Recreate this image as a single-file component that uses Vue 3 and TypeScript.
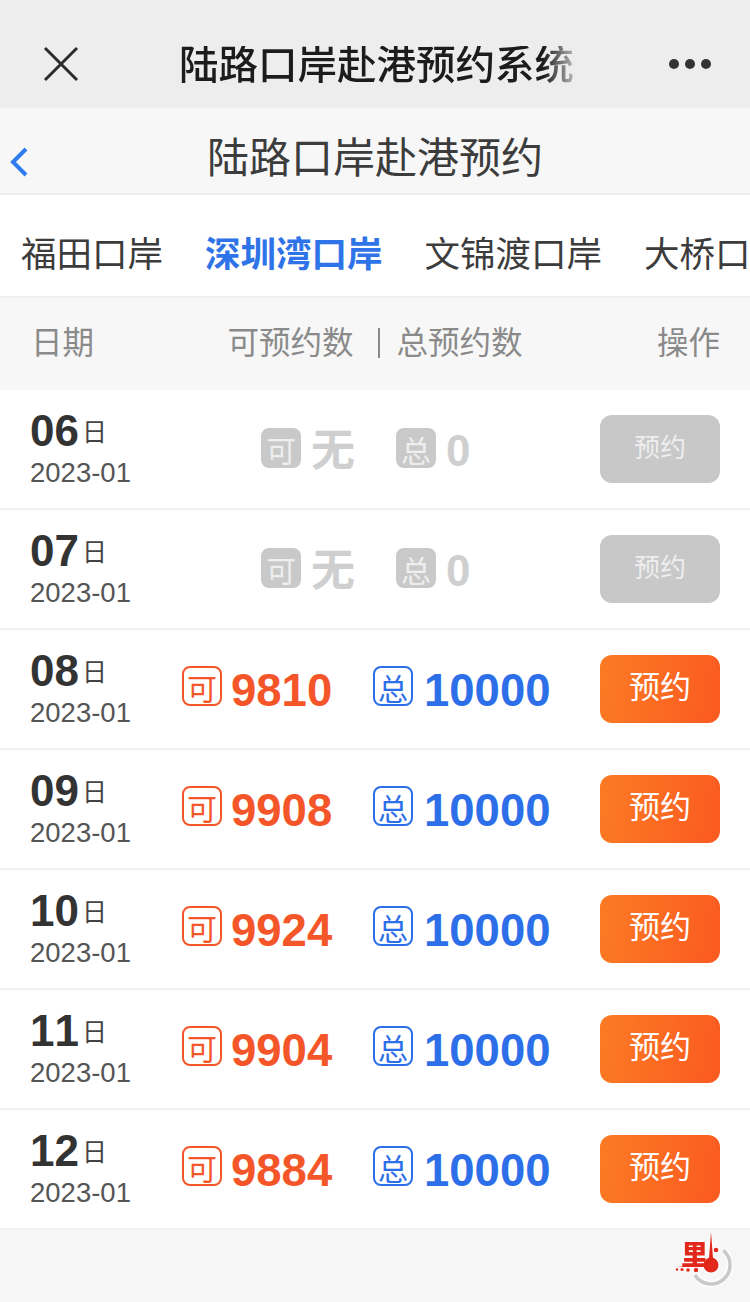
<script setup lang="ts">
interface Row { day: string; avail: string; total: string; off: boolean }
const rows: Row[] = [
  { day: '06', avail: '无', total: '0', off: true },
  { day: '07', avail: '无', total: '0', off: true },
  { day: '08', avail: '9810', total: '10000', off: false },
  { day: '09', avail: '9908', total: '10000', off: false },
  { day: '10', avail: '9924', total: '10000', off: false },
  { day: '11', avail: '9904', total: '10000', off: false },
  { day: '12', avail: '9884', total: '10000', off: false },
]
const tabs = ['福田口岸', '深圳湾口岸', '文锦渡口岸', '大桥口']
</script>

<template>
  <div class="page">
    <header class="wx">
      <svg class="close" width="36" height="36" viewBox="0 0 36 36"><path d="M2 2 L34 34 M34 2 L2 34" stroke="#2c2c2c" stroke-width="3" fill="none" /></svg>
      <div class="wx-title">陆路口岸赴港预约系统</div>
      <div class="dots"><i></i><i></i><i></i></div>
    </header>
    <div class="sub">
      <svg class="back" width="20" height="30" viewBox="0 0 20 30"><path d="M17 2 L4 15 L17 28" stroke="#2f7cf0" stroke-width="4" fill="none" /></svg>
      <span>陆路口岸赴港预约</span>
    </div>
    <nav class="tabs">
      <span v-for="(t, i) in tabs" :key="t" class="tab" :class="{ on: i === 1 }">{{ t }}</span>
    </nav>
    <div class="head">
      <span class="h-date">日期</span>
      <span class="h-mid"><span>可预约数</span><b></b><span>总预约数</span></span>
      <span class="h-op">操作</span>
    </div>
    <div v-for="r in rows" :key="r.day" class="row" :class="{ off: r.off }">
      <div class="date">
        <div class="dline"><strong>{{ r.day }}</strong><em>日</em></div>
        <div class="ym">2023-01</div>
      </div>
      <div class="counts">
        <span class="stat avail"><span class="tag">可</span><span class="num">{{ r.avail }}</span></span>
        <span class="stat total"><span class="tag">总</span><span class="num">{{ r.total }}</span></span>
      </div>
      <div class="btn">预约</div>
    </div>
    <div class="logo">
      <svg width="62" height="62" viewBox="0 0 62 62">
        <path d="M48.2 18.4 A 19 19 0 1 1 19.9 43" fill="none" stroke="#c9c9c9" stroke-width="3.5" />
        <text x="6" y="33" class="lg">里</text>
        <path d="M36 0 L38 26 L34 26 Z" fill="#e2281b" />
        <circle cx="41" cy="18" r="2.3" fill="#e2281b" />
        <circle cx="36" cy="33" r="7.5" fill="#e2281b" />
        <path d="M2 35 L30 31.5 L30 34.5 Z" fill="#e2281b" />
        <circle cx="2" cy="37.5" r="1.3" fill="#e2281b" /><circle cx="7" cy="37.5" r="1.6" fill="#e2281b" />
        <circle cx="13" cy="38" r="1.8" fill="#e2281b" /><circle cx="21" cy="38" r="2.2" fill="#e2281b" />
      </svg>
    </div>
  </div>
</template>

<style scoped>
.page { position: relative; width: 750px; height: 1302px; background: #f6f6f6; overflow: hidden; font-family: "Liberation Sans", "Noto Sans CJK SC", sans-serif; color: #333; font-kerning: none; }
.wx { height: 108px; box-sizing: border-box; padding: 46px 39px 0 43px; background: #ededed; display: flex; align-items: flex-start; }
.close { flex: none; }
.wx-title { width: 396px; margin-left: 100px; font-size: 39.5px; line-height: 38px; font-weight: 500; white-space: nowrap; background: linear-gradient(90deg, #1c1c1c 92%, #bbb 100%); -webkit-background-clip: text; background-clip: text; color: transparent; }
.dots { margin-left: auto; margin-top: 13px; display: flex; gap: 6px; }
.dots i { width: 10px; height: 10px; border-radius: 50%; background: #333; }
.sub { height: 87px; box-sizing: border-box; border-bottom: 2px solid #efefef; background: #f7f7f7; position: relative; display: flex; align-items: center; justify-content: center; font-size: 42px; color: #3c3c3c; }
.sub span { margin-top: 8px; }
.back { position: absolute; left: 9px; top: 39px; }
.tabs { height: 103px; box-sizing: border-box; border-bottom: 2px solid #efefef; background: #fff; display: flex; align-items: center; gap: 42px; padding: 11px 0 0 21px; white-space: nowrap; overflow: hidden; font-size: 35.5px; color: #3c3c3c; }
.tab { flex: none; }
.tab.on { color: #2f73e8; font-weight: 700; }
.head { height: 92px; box-sizing: border-box; padding: 0 30px 8px 31px; background: #f7f7f7; display: flex; align-items: center; justify-content: space-between; font-size: 31.5px; color: #8a8a8a; }
.h-mid { display: flex; align-items: center; margin-right: 1px; }
.h-mid b { width: 2px; height: 30px; background: #8a8a8a; margin: 6px 17px 0 24px; }
.row { height: 120px; box-sizing: border-box; border-bottom: 2px solid #f2f2f2; background: #fff; display: flex; align-items: center; padding: 2px 30px 0; }
.date { width: 152px; flex: none; margin-top: 1px; }
.dline { display: flex; align-items: flex-start; height: 44px; }
.dline strong { font-size: 44px; line-height: 44px; font-weight: 700; color: #333; }
.dline em { font-style: normal; font-size: 25px; line-height: 26px; color: #444; margin: 10px 0 0 3px; }
.ym { font-size: 27.5px; line-height: 38px; margin-top: 1px; color: #555; }
.counts { flex: 1; display: flex; align-items: center; }
.off .counts { padding-left: 79px; }
.stat { display: flex; align-items: center; gap: 9px; }
.avail { color: #f4562a; width: 191px; }
.total { color: #2c6fe8; gap: 11px; }
.off .avail { width: 135px; }
.tag { width: 40px; height: 40px; flex: none; box-sizing: border-box; border: 2px solid currentColor; border-radius: 8px; font-size: 30px; line-height: 40px; padding-top: 2px; text-align: center; overflow: hidden; margin-bottom: 8px; }
.num { font-size: 45.5px; line-height: 50px; font-weight: 700; padding-top: 2px; }
.off .stat { color: #cfcfcf; gap: 10px; }
.off .tag { background: #c9c9c9; color: #eee; border-color: #c9c9c9; margin-bottom: 4px; }
.off .num { color: #cfcfcf; font-size: 44px; }
.btn { width: 120px; height: 68px; flex: none; margin-left: auto; margin-top: -2px; border-radius: 12px; background: linear-gradient(100deg, #fb7b24, #fb5a20); color: #fff; font-size: 31px; line-height: 66px; text-align: center; }
.off .btn { background: #c8c8c8; color: #eee; font-size: 26px; }
.logo { position: absolute; left: 675px; top: 1232px; filter: drop-shadow(0 0 1.5px #fff) drop-shadow(0 0 1.5px #fff); }
.lg { font-size: 27px; font-weight: 900; fill: #e2281b; }
</style>
